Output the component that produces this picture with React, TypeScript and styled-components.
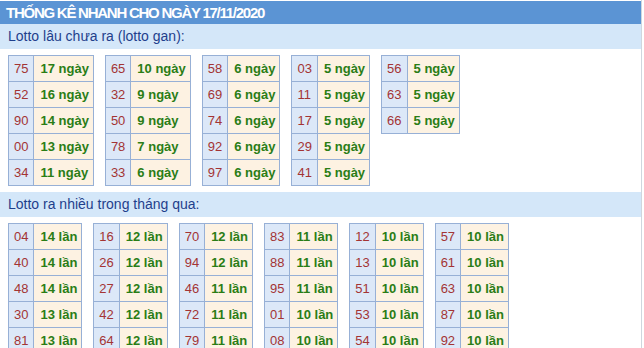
import styled, { createGlobalStyle } from 'styled-components';

const GlobalStyle = createGlobalStyle`
  body {
    margin: 0;
    background: #fff;
    font-family: Arial, "Liberation Sans", sans-serif;
  }
`;

const Box = styled.div`
  width: 641px;
  padding-top: 1px;
  border-right: 1px solid #cfd6de;
  min-height: 347px;
`;

const Title = styled.div`
  height: 23px;
  background: #5b94d4;
  color: #fff;
  font-size: 15px;
  font-weight: 700;
  letter-spacing: -1.25px;
  line-height: 23px;
  padding-left: 6px;
`;

const SubTitle = styled.div`
  height: 25px;
  background: #d4e7f9;
  color: #1f3f8c;
  font-size: 14px;
  line-height: 25px;
  padding-left: 8px;
`;

const Tables = styled.div`
  display: flex;
  align-items: flex-start;
  gap: 11px;
  padding: 6px 8px;
`;

const Grid = styled.table`
  border-collapse: collapse;
  font-size: 13px;
`;

const NumCell = styled.td`
  height: 25px;
  padding: 0 5px;
  border: 1px solid #97b0d6;
  background: #dce8f8;
  color: #a33434;
`;

const ValCell = styled.td`
  height: 25px;
  padding: 0 4px 0 6px;
  border: 1px solid #97b0d6;
  background: #fdf2e2;
  color: #2a7d16;
  font-weight: 700;
  white-space: nowrap;
`;

type Pair = [string, string];

const gan: Pair[][] = [
  [['75', '17 ngày'], ['52', '16 ngày'], ['90', '14 ngày'], ['00', '13 ngày'], ['34', '11 ngày']],
  [['65', '10 ngày'], ['32', '9 ngày'], ['50', '9 ngày'], ['78', '7 ngày'], ['33', '6 ngày']],
  [['58', '6 ngày'], ['69', '6 ngày'], ['74', '6 ngày'], ['92', '6 ngày'], ['97', '6 ngày']],
  [['03', '5 ngày'], ['11', '5 ngày'], ['17', '5 ngày'], ['29', '5 ngày'], ['41', '5 ngày']],
  [['56', '5 ngày'], ['63', '5 ngày'], ['66', '5 ngày']],
];

const nhieu: Pair[][] = [
  [['04', '14 lần'], ['40', '14 lần'], ['48', '14 lần'], ['30', '13 lần'], ['81', '13 lần']],
  [['16', '12 lần'], ['26', '12 lần'], ['27', '12 lần'], ['42', '12 lần'], ['64', '12 lần']],
  [['70', '12 lần'], ['94', '12 lần'], ['46', '11 lần'], ['72', '11 lần'], ['79', '11 lần']],
  [['83', '11 lần'], ['88', '11 lần'], ['95', '11 lần'], ['01', '10 lần'], ['08', '10 lần']],
  [['12', '10 lần'], ['13', '10 lần'], ['51', '10 lần'], ['53', '10 lần'], ['54', '10 lần']],
  [['57', '10 lần'], ['61', '10 lần'], ['63', '10 lần'], ['87', '10 lần'], ['92', '10 lần']],
];

const Section = ({ label, groups }: { label: string; groups: Pair[][] }) => (
  <>
    <SubTitle>{label}</SubTitle>
    <Tables>
      {groups.map((rows, i) => (
        <Grid key={i}>
          <tbody>
            {rows.map(([num, val]) => (
              <tr key={num}>
                <NumCell>{num}</NumCell>
                <ValCell>{val}</ValCell>
              </tr>
            ))}
          </tbody>
        </Grid>
      ))}
    </Tables>
  </>
);

export default function App() {
  return (
    <>
      <GlobalStyle />
      <Box>
        <Title>THỐNG KÊ NHANH CHO NGÀY 17/11/2020</Title>
        <Section label="Lotto lâu chưa ra (lotto gan):" groups={gan} />
        <Section label="Lotto ra nhiều trong tháng qua:" groups={nhieu} />
      </Box>
    </>
  );
}
